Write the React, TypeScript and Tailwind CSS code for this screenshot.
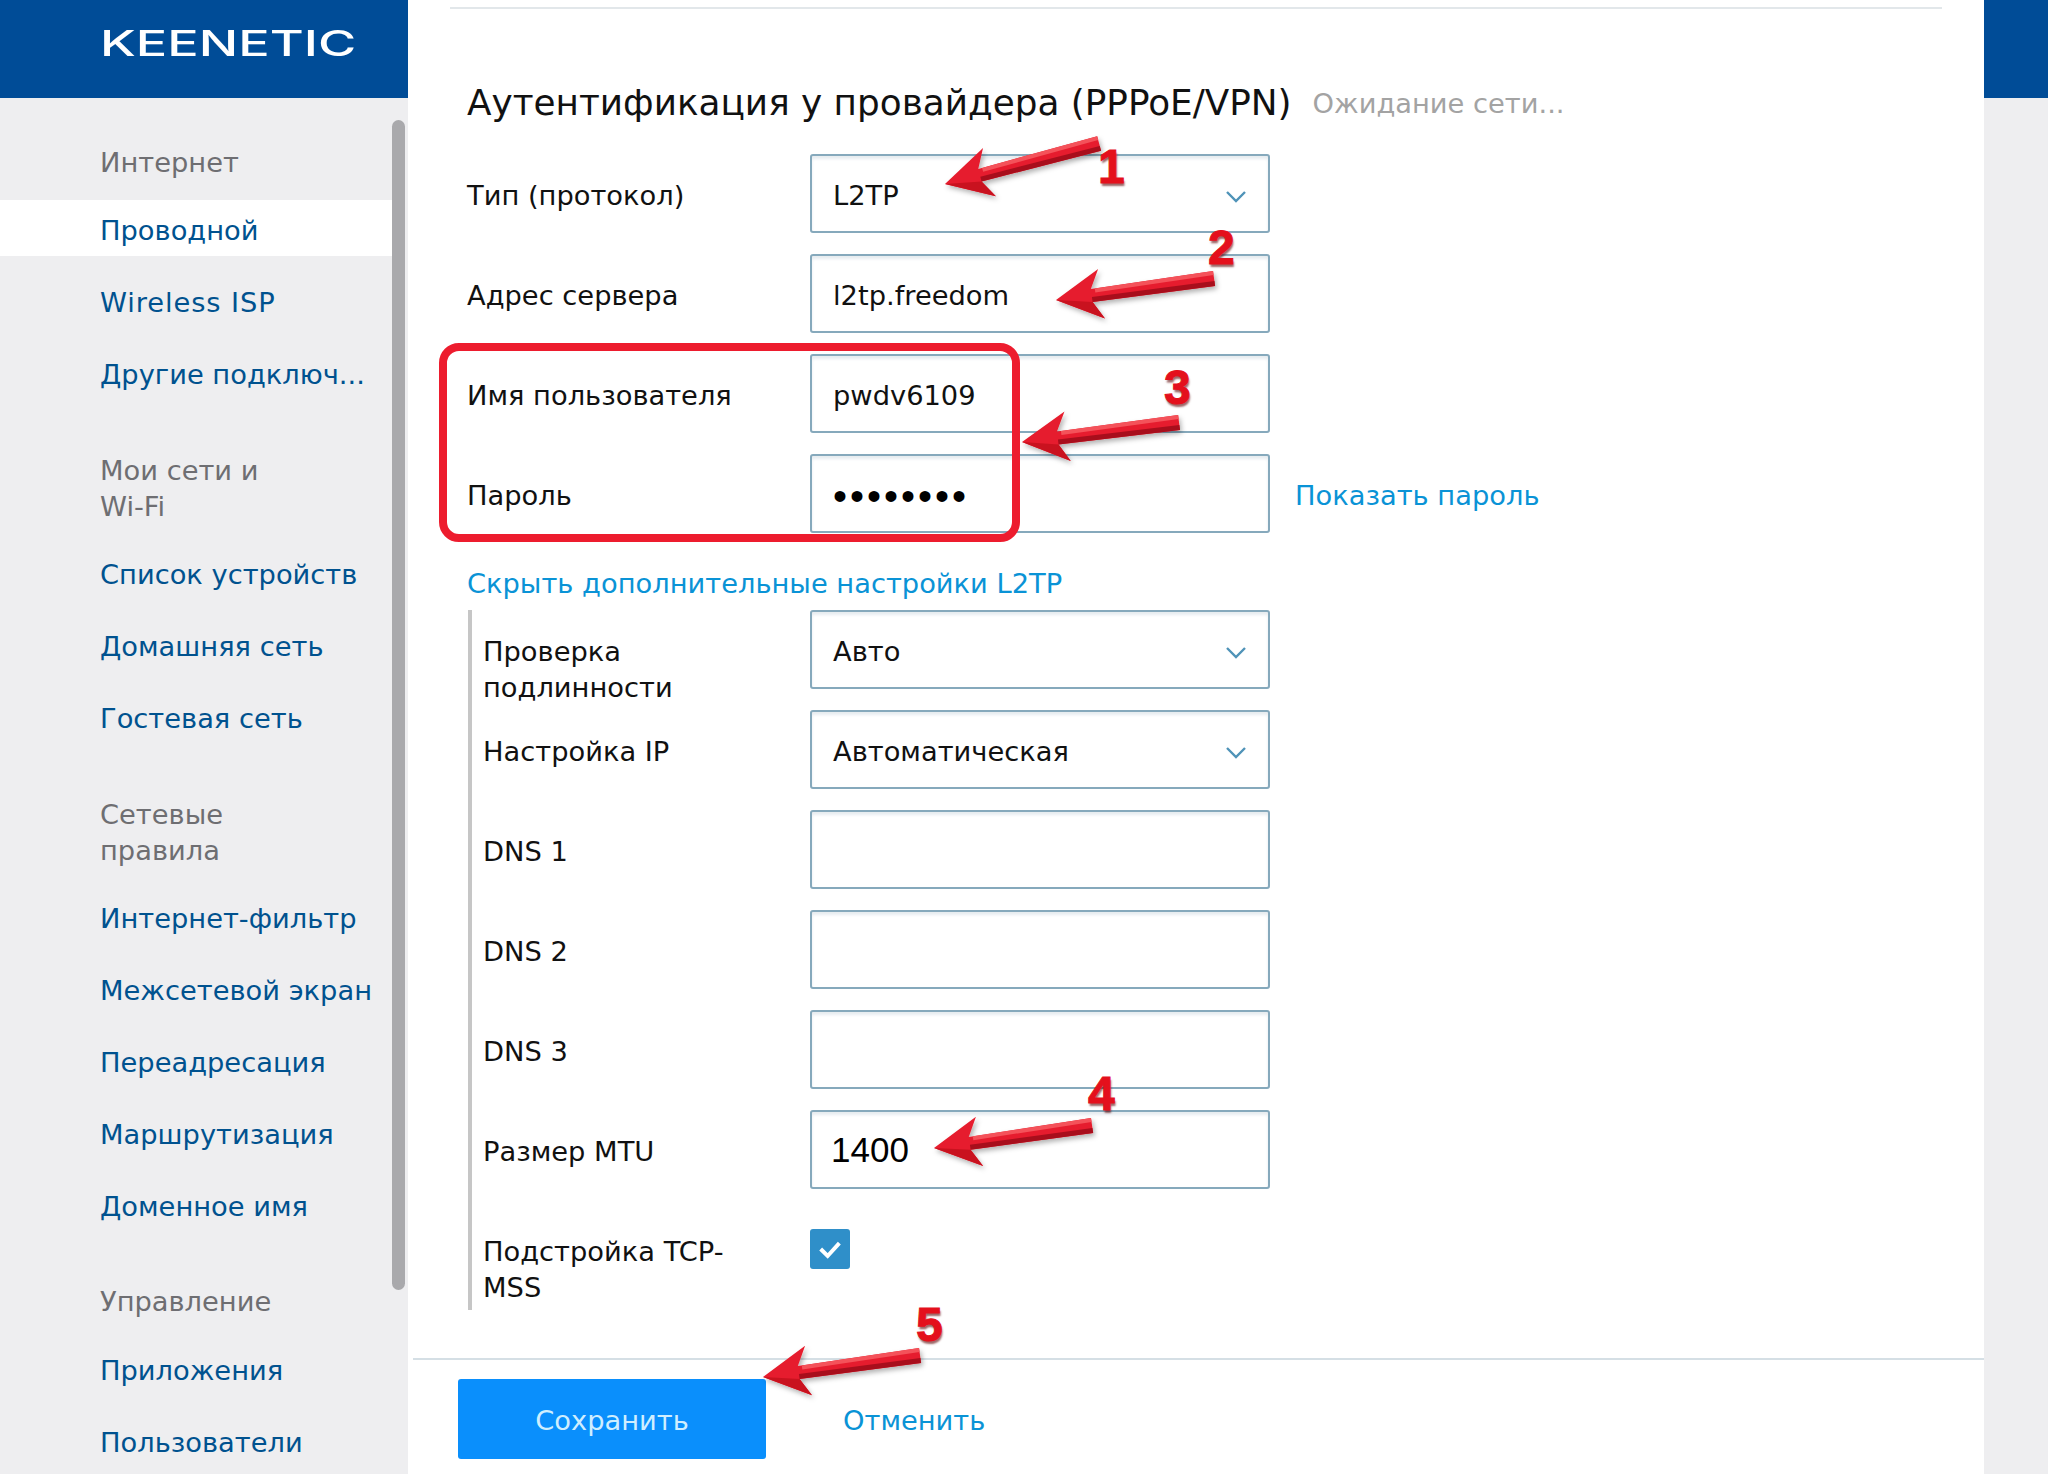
import type { ReactNode } from "react";

type NavGroup = {
  title: string[];
  links: string[];
  className: string;
  linksClassName: string;
};

const navGroups: NavGroup[] = [
  { title: ["Интернет"], links: ["Проводной", "Wireless ISP", "Другие подключ..."], className: "mt-[47px]", linksClassName: "mt-[19px]" },
  { title: ["Мои сети и", "Wi-Fi"], links: ["Список устройств", "Домашняя сеть", "Гостевая сеть"], className: "mt-[53px]", linksClassName: "mt-[19px]" },
  {
    title: ["Сетевые", "правила"],
    links: ["Интернет-фильтр", "Межсетевой экран", "Переадресация", "Маршрутизация", "Доменное имя"],
    className: "mt-[53px]",
    linksClassName: "mt-[19px]"
  },
  { title: ["Управление"], links: ["Приложения", "Пользователи"], className: "mt-[52px]", linksClassName: "mt-[20px]" }
];

type Point = [number, number];

const arrows: { tip: Point; tail: Point }[] = [
  { tip: [945, 184], tail: [1099, 143] },
  { tip: [1056, 300], tail: [1214, 278] },
  { tip: [1022, 442], tail: [1179, 422] },
  { tip: [934, 1148], tail: [1092, 1125] },
  { tip: [763, 1377], tail: [920, 1355] }
];

const badges = [
  { label: "1", className: "left-[1098px] top-[141px]" },
  { label: "2", className: "left-[1208px] top-[222px]" },
  { label: "3", className: "left-[1164px] top-[362px]" },
  { label: "4", className: "left-[1088px] top-[1068px]" },
  { label: "5", className: "left-[916px] top-[1299px]" }
];

function Sidebar() {
  return (
    <aside className="relative flex w-[408px] shrink-0 flex-col bg-[#eeeef0] text-[27.3px] leading-[36px]">
      <div className="h-[98px] shrink-0 overflow-hidden bg-[#004c97] pl-[100px] pt-[21px]">
        <span className="block origin-left scale-x-[1.49] font-['Inter',sans-serif] text-[35px] font-medium leading-[44px] text-white">
          KEENETIC
        </span>
      </div>
      {navGroups.map((group) => (
        <div key={group.title[0]} className={group.className}>
          <div className="pl-[100px] text-[#6e6e72]">
            {group.title.map((line) => (
              <div key={line}>{line}</div>
            ))}
          </div>
          <div className={`${group.linksClassName} flex flex-col gap-4`}>
            {group.links.map((link) => (
              <div
                key={link}
                className={`flex h-14 items-center whitespace-nowrap pl-[100px] pt-[6px] text-[#00528f] ${link === "Проводной" ? "mr-4 bg-white" : ""} ${link === "Wireless ISP" ? "tracking-[0.9px]" : ""}`}
              >
                {link}
              </div>
            ))}
          </div>
        </div>
      ))}
      <div className="absolute left-[392px] top-[120px] h-[1170px] w-[13px] rounded-full bg-[#a9a9ac]" />
    </aside>
  );
}

function Chevron() {
  return (
    <svg viewBox="0 0 20 12" className="mt-[2px] h-3 w-5 text-[#4f93b8]" fill="none" stroke="currentColor" strokeWidth="2.4">
      <polyline points="1,1 10,10 19,1" />
    </svg>
  );
}

function Field({ children, chevron = false, className = "" }: { children?: ReactNode; chevron?: boolean; className?: string }) {
  return (
    <div
      className={`flex h-[79px] w-[460px] items-center justify-between rounded-[3px] border-2 border-[#86a9bc] bg-white pl-[21px] pr-[22px] pt-1 shadow-[inset_0_3px_3px_rgba(120,150,170,0.18)] ${className}`}
    >
      <span>{children}</span>
      {chevron ? <Chevron /> : null}
    </div>
  );
}

function Row({ label, labelWidth, children }: { label: string[]; labelWidth: string; children: ReactNode }) {
  return (
    <div className="flex h-[100px] items-start">
      <div className={`${labelWidth} shrink-0 pt-6`}>
        {label.map((line) => (
          <div key={line}>{line}</div>
        ))}
      </div>
      {children}
    </div>
  );
}

function Annotations() {
  return (
    <>
      <div className="absolute left-[439px] top-[343px] h-[199px] w-[581px] rounded-[20px] border-[8px] border-[#ed1c2e]" />
      <svg className="absolute left-0 top-0" width="2048" height="1474" fill="none">
        <defs>
          <filter id="arrow-shadow" x="-20%" y="-40%" width="140%" height="200%">
            <feDropShadow dx="2" dy="3" stdDeviation="2.5" floodColor="#000" floodOpacity="0.3" />
          </filter>
        </defs>
        {arrows.map(({ tip, tail }) => {
          const dx = tail[0] - tip[0];
          const dy = tail[1] - tip[1];
          const len = Math.hypot(dx, dy);
          const ux = dx / len;
          const uy = dy / len;
          const at = (along: number, side: number) =>
            `${tip[0] + ux * along - uy * side},${tip[1] + uy * along + ux * side}`;
          const body = [at(0, 0), at(46, 25), at(36, 7), at(len, 8), at(len, -7), at(36, -6), at(46, -25)].join(" ");
          const lowerEdge = [at(36, 7), at(len, 8), at(len, 3), at(36, 2)].join(" ");
          const upperEdge = [at(40, -6), at(len, -7), at(len, -3), at(40, -2)].join(" ");
          const lowerFacet = [at(0, 0), at(46, 25), at(36, 7)].join(" ");
          return (
            <g key={tip[0]}>
              <polygon points={body} fill="#e61f2d" filter="url(#arrow-shadow)" />
              <polygon points={upperEdge} fill="#f4525a" />
              <polygon points={lowerEdge} fill="#a80e1c" />
              <polygon points={lowerFacet} fill="#c9121f" />
            </g>
          );
        })}
      </svg>
      {badges.map((badge) => (
        <span
          key={badge.label}
          className={`absolute font-['Liberation_Sans',sans-serif] text-[48px] font-bold leading-[52px] text-[#e4101c] [-webkit-text-stroke:1px_#e4101c] [text-shadow:1px_3px_2px_rgba(90,0,0,0.6)] ${badge.className}`}
        >
          {badge.label}
        </span>
      ))}
    </>
  );
}

export default function App() {
  return (
    <div className="relative flex h-[1474px] w-[2048px] overflow-hidden bg-white font-['DejaVu_Sans',sans-serif] text-[27.3px] leading-[36px] text-[#111]">
      <Sidebar />
      <main className="min-w-0 flex-1">
        <div className="ml-[42px] mr-[42px] mt-[7px] h-0.5 bg-[#e2e7ea]" />
        <div className="ml-[59px]">
          <div className="mt-[71px] flex h-11 items-center whitespace-nowrap">
            <h1 className="pt-[2px] text-[35.8px] font-normal leading-[44px]">Аутентификация у провайдера (PPPoE/VPN)</h1>
            <span className="ml-[21px] pt-1 text-[#a3a3a3]">Ожидание сети...</span>
          </div>
          <div className="mt-[30px]">
            <Row label={["Тип (протокол)"]} labelWidth="w-[343px]">
              <Field chevron>L2TP</Field>
            </Row>
            <Row label={["Адрес сервера"]} labelWidth="w-[343px]">
              <Field>l2tp.freedom</Field>
            </Row>
            <Row label={["Имя пользователя"]} labelWidth="w-[343px]">
              <Field>pwdv6109</Field>
            </Row>
            <Row label={["Пароль"]} labelWidth="w-[343px]">
              <Field>
                <span className="inline-block pt-[6px] font-['Liberation_Sans',sans-serif] text-[40px] tracking-[3px] text-black">
                  ••••••••
                </span>
              </Field>
              <span className="ml-[25px] mt-6 whitespace-nowrap text-[#0a93d6]">Показать пароль</span>
            </Row>
          </div>
          <div className="-mt-[2px] h-[58px] pt-[14px] text-[#0a93d6]">Скрыть дополнительные настройки L2TP</div>
          <div className="ml-px h-[700px] border-l-4 border-[#c6c6c6] pl-[11px]">
            <Row label={["Проверка", "подлинности"]} labelWidth="w-[327px]">
              <Field chevron>Авто</Field>
            </Row>
            <Row label={["Настройка IP"]} labelWidth="w-[327px]">
              <Field chevron>Автоматическая</Field>
            </Row>
            <Row label={["DNS 1"]} labelWidth="w-[327px]">
              <Field />
            </Row>
            <Row label={["DNS 2"]} labelWidth="w-[327px]">
              <Field />
            </Row>
            <Row label={["DNS 3"]} labelWidth="w-[327px]">
              <Field />
            </Row>
            <Row label={["Размер MTU"]} labelWidth="w-[327px]">
              <Field className="!pl-[19px]">
                <span className="font-['Liberation_Sans',sans-serif] text-[35px] text-black">1400</span>
              </Field>
            </Row>
            <Row label={["Подстройка TCP-", "MSS"]} labelWidth="w-[327px]">
              <div className="mt-[19px] flex h-10 w-10 items-center justify-center rounded-[3px] bg-[#2f8fc9]">
                <svg viewBox="0 0 24 24" className="h-7 w-7" fill="none" stroke="#fff" strokeWidth="3.4">
                  <polyline points="4,12 10,18 20,7" />
                </svg>
              </div>
            </Row>
          </div>
        </div>
        <div className="ml-[5px] mt-[48px] h-0.5 bg-[#d5dfe5]" />
        <div className="ml-[50px] mt-[19px] flex items-center">
          <button type="button" className="h-20 w-[308px] rounded-[3px] bg-[#0a8ffc] pt-[3px] text-center text-[#cfeeff]">
            Сохранить
          </button>
          <span className="ml-[77px] pt-[3px] text-[#0a93d6]">Отменить</span>
        </div>
      </main>
      <div className="w-[64px] shrink-0 bg-[#eeeef0]">
        <div className="h-[98px] bg-[#004c97]" />
      </div>
      <Annotations />
    </div>
  );
}
